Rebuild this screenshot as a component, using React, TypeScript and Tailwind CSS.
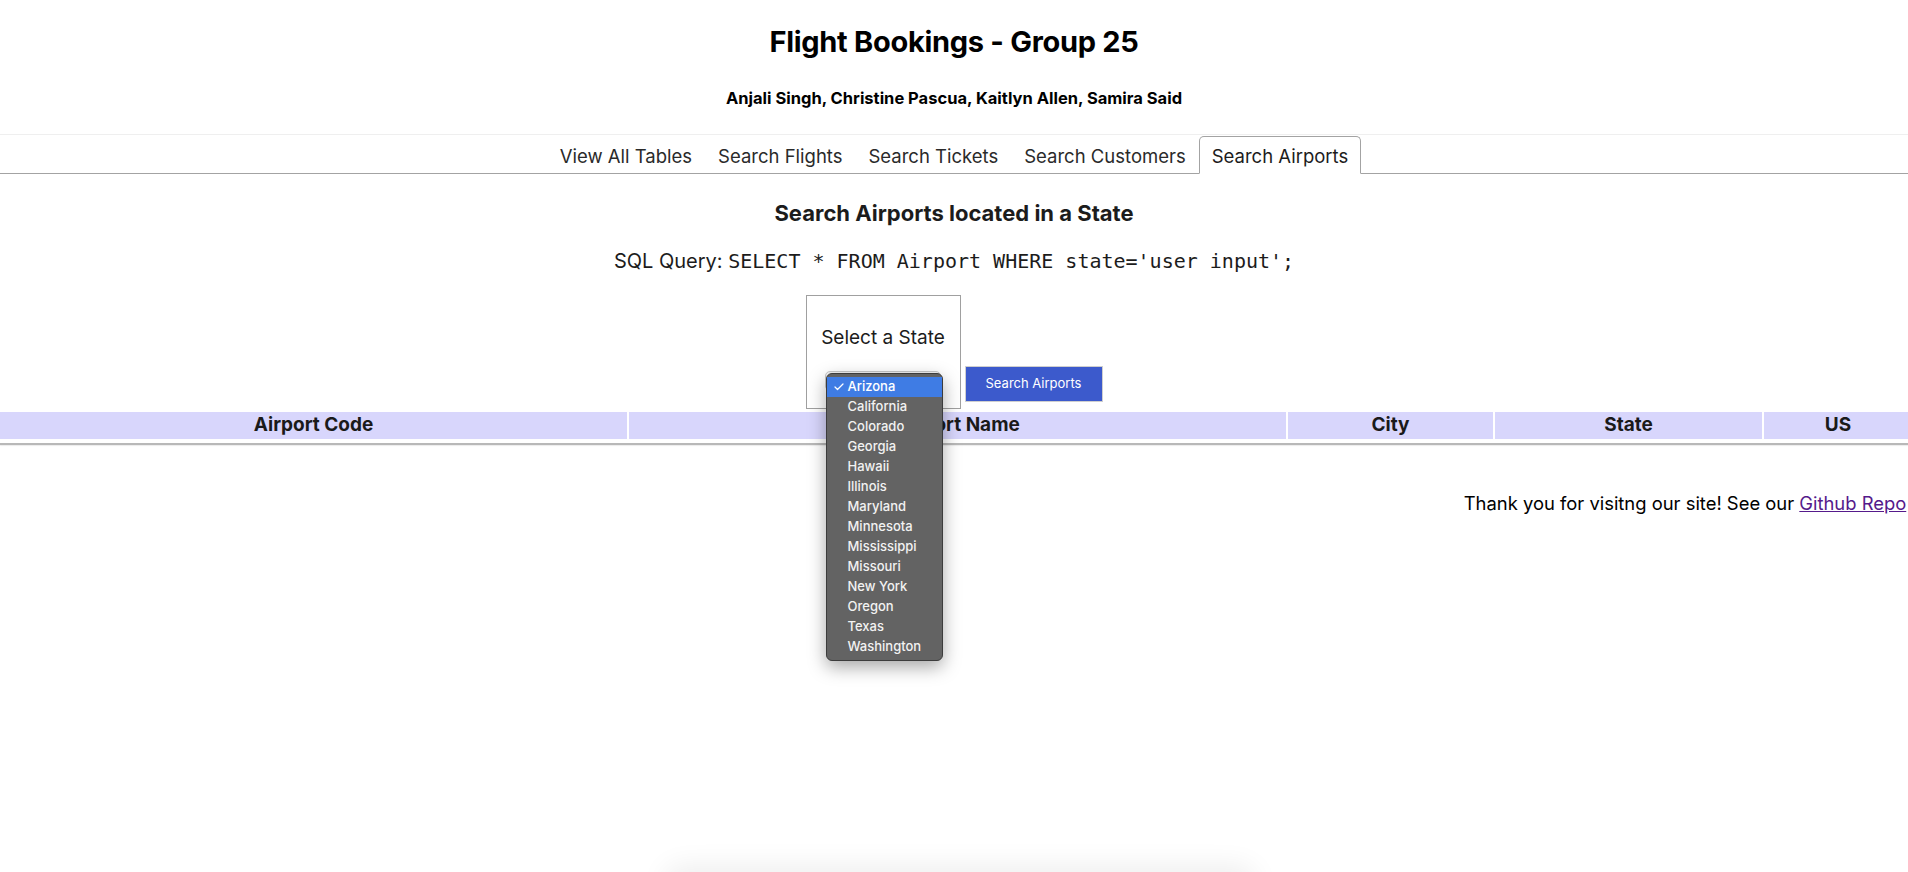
import { Check } from "lucide-react";

const tabs = ["View All Tables", "Search Flights", "Search Tickets", "Search Customers", "Search Airports"];

const states = [
  "Arizona",
  "California",
  "Colorado",
  "Georgia",
  "Hawaii",
  "Illinois",
  "Maryland",
  "Minnesota",
  "Mississippi",
  "Missouri",
  "New York",
  "Oregon",
  "Texas",
  "Washington",
];

const columns = [
  { label: "Airport Code", w: "w-[627px]" },
  { label: "Airport Name", w: "w-[657px]" },
  { label: "City", w: "w-[205px]" },
  { label: "State", w: "w-[267px]" },
  { label: "US", w: "w-[148px]" },
  { label: "", w: "w-[1450px]" },
];

export default function App() {
  return (
    <div className="relative min-h-[872px] w-full overflow-hidden bg-white text-[#1c1c1c] font-['Inter','Liberation_Sans',sans-serif]">
      {/* Header */}
      <header className="flex flex-col items-center pt-[24px]">
        <h1 className="text-[29px] font-bold leading-[36px] text-black tracking-[-0.01em]">Flight Bookings - Group 25</h1>
        <p className="mt-[28px] text-[16.5px] font-bold leading-[20px] text-black">
          Anjali Singh, Christine Pascua, Kaitlyn Allen, Samira Said
        </p>
      </header>
      <div className="mt-[26px] h-px bg-[#efefef]" />

      {/* Tabs */}
      <nav className="mt-px flex justify-center border-b border-[#a3a3a3]">
        <ul className="flex -mb-px">
          {tabs.map((t) => {
            const active = t === "Search Airports";
            return (
              <li
                key={t}
                className={
                  active
                    ? "h-[38px] px-[12px] pt-[3px] flex items-center text-[18.5px] text-[#1c1c1c] bg-white border border-[#a3a3a3] border-b-white rounded-t-[5px]"
                    : "h-[38px] px-[12px] pt-[3px] flex items-center text-[18.5px] text-[#2a2a2a] border border-transparent"
                }
              >
                {t}
              </li>
            );
          })}
        </ul>
      </nav>

      {/* Search section */}
      <section className="flex flex-col items-center">
        <h2 className="mt-[25px] text-[22px] font-bold leading-[28px] text-[#1c1c1c]">Search Airports located in a State</h2>
        <p className="mt-[20px] text-[20px] leading-[28px] text-[#1c1c1c]">
          SQL Query:{" "}
          <code className="font-['DejaVu_Sans_Mono','Liberation_Mono',monospace] text-[20px]">
            SELECT * FROM Airport WHERE state='user input';
          </code>
        </p>

        <div className="mt-[20px] flex items-start gap-[4px]">
          <div className="relative w-[155px] h-[114px] border border-[#a0a0a0] flex flex-col items-center pt-[30px]">
            <label className="text-[19px] leading-[24px] text-[#1c1c1c]">Select a State</label>
            <div className="mt-[21px] h-[20px] w-[116px] rounded-[5px] bg-[#f4f4f4] border border-[#c8c8c8]" />

            {/* open select menu */}
            <div className="absolute left-[19px] top-[77px] z-10 w-[117px] rounded-[6px] border border-[#3c3c3c] bg-[#636363] py-[3px] shadow-[0_6px_18px_rgba(0,0,0,0.35)]">
              {states.map((s, i) => (
                <div
                  key={s}
                  className={
                    i === 0
                      ? "relative h-[20px] flex items-center pl-[21px] text-[13px] font-medium text-white bg-[#3f7ce4]"
                      : "relative h-[20px] flex items-center pl-[21px] text-[13px] font-medium text-[#f2f2f2]"
                  }
                >
                  {i === 0 && (
                    <Check className="absolute left-[6px] top-[4px] w-[12px] h-[12px] text-white" strokeWidth={2.5} />
                  )}
                  {s}
                </div>
              ))}
            </div>
          </div>
          <button className="mt-[71px] h-[36px] w-[138px] border border-[#cfcfcf] bg-[#3c5acc] text-[13px] text-white">
            Search Airports
          </button>
        </div>
      </section>

      {/* Results + footer: wider than the window */}
      <div className="w-[3370px]">
        <div className="mt-[3px] flex gap-[2px]">
          {columns.map((c, i) => (
            <div
              key={i}
              className={`${c.w} shrink-0 h-[27px] bg-[#d8d6fc] flex items-center justify-center text-[19px] font-bold text-[#1a1a1a]`}
            >
              {c.label}
            </div>
          ))}
        </div>
        <div className="mt-[4px] h-[2px] bg-[#b8b8b8] shadow-[0_1px_1px_rgba(0,0,0,0.08)]" />

        <p className="mt-[46px] text-center text-[18.4px] leading-[24px] text-black">
          Thank you for visitng our site! See our{" "}
          <a href="#" className="text-[#551a8b] underline">
            Github Repo
          </a>
        </p>
      </div>

      {/* faint shadow at the bottom of the window */}
      <div className="pointer-events-none fixed bottom-[-24px] left-[670px] h-[24px] w-[580px] rounded-full bg-white shadow-[0_0_28px_6px_rgba(0,0,0,0.07)]" />
    </div>
  );
}
